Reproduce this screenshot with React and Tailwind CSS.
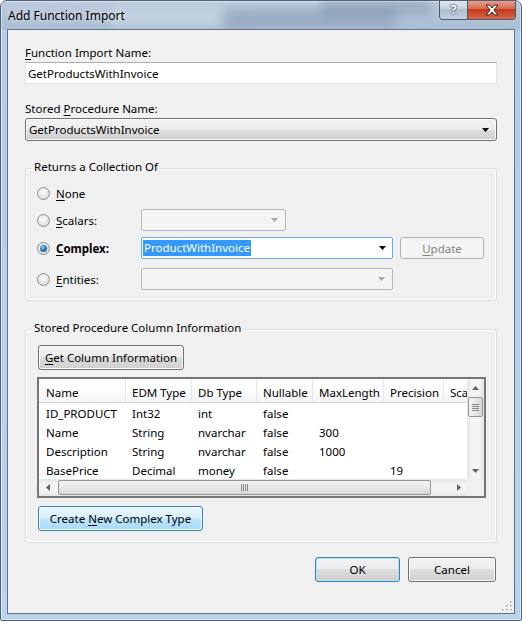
import React from "react";

const btn =
  "flex items-center justify-center rounded-[3px] border border-[#707070] bg-[linear-gradient(180deg,#f2f2f2_0%,#ebebeb_50%,#dddddd_50%,#cfcfcf_100%)] shadow-[inset_0_0_0_1px_#fbfbfb]";
const btnBlue =
  "flex items-center justify-center rounded-[3px] border border-[#3c7fb1] bg-[linear-gradient(180deg,#eaf6fd_0%,#d9f0fc_50%,#bee6fd_50%,#a7d9f5_100%)] shadow-[inset_0_0_0_1px_#f4fbff]";
const btnDefault =
  "flex items-center justify-center rounded-[3px] border border-[#3c7fb1] bg-[linear-gradient(180deg,#f2f2f2_0%,#ebebeb_50%,#dddddd_50%,#cfcfcf_100%)] shadow-[inset_0_0_0_1px_#b6e0f6]";

function U({ children }) {
  return <span className="underline underline-offset-[2px] decoration-1">{children}</span>;
}

function Arrow({ color = "#000" }) {
  return (
    <svg width="7" height="4" viewBox="0 0 7 4">
      <path d="M0 0H7L3.5 4Z" fill={color} />
    </svg>
  );
}

function DisabledCombo({ className }) {
  return (
    <div className={`flex h-[22px] items-center justify-end rounded-[2px] border border-[#b5b9bd] bg-[#f4f4f4] pr-[7px] ${className}`}>
      <Arrow color="#a7a7a7" />
    </div>
  );
}

function Radio({ checked }) {
  return (
    <div className="flex h-[13px] w-[13px] shrink-0 items-center justify-center rounded-full border border-[#8f8f8f] bg-[radial-gradient(circle_at_45%_40%,#ffffff_0%,#e9e9e9_45%,#cfcfcf_100%)]">
      {checked && (
        <div className="h-[7px] w-[7px] rounded-full bg-[radial-gradient(circle_at_40%_35%,#8fd2f8_0%,#2d7cb8_45%,#0c3f6e_100%)]" />
      )}
    </div>
  );
}

function RadioRow({ checked, label, bold, children, className = "" }) {
  return (
    <div className={`flex h-[22px] items-center ${className}`}>
      <div className="flex w-[104px] items-center gap-[6px]">
        <Radio checked={checked} />
        <span className={bold ? "font-bold" : ""}>{label}</span>
      </div>
      {children}
    </div>
  );
}

function Group({ title, className = "", children }) {
  return (
    <div className={`relative w-[472px] rounded-[3px] border border-[#d5dfe5] shadow-[inset_0_0_0_1px_#ffffff] ${className}`}>
      <span className="absolute -top-[10px] left-[7px] bg-[#f0f0f0] px-[1px]">{title}</span>
      {children}
    </div>
  );
}

const cols = [
  { title: "Name", cls: "w-[87px] pl-[7px]" },
  { title: "EDM Type", cls: "w-[66px] pl-[6px]" },
  { title: "Db Type", cls: "w-[65px] pl-[6px]" },
  { title: "Nullable", cls: "w-[56px] pl-[6px]" },
  { title: "MaxLength", cls: "w-[71px] pl-[6px]" },
  { title: "Precision", cls: "w-[60px] pl-[6px]" },
  { title: "Scale", cls: "w-[60px] pl-[6px]" },
];

const rows = [
  ["ID_PRODUCT", "Int32", "int", "false", "", "", ""],
  ["Name", "String", "nvarchar", "false", "300", "", ""],
  ["Description", "String", "nvarchar", "false", "1000", "", ""],
  ["BasePrice", "Decimal", "money", "false", "", "19", ""],
];

function ScrollArrow({ dir }) {
  const d = {
    up: "M3.5 0L7 4H0Z",
    down: "M0 0H7L3.5 4Z",
    left: "M0 3.5L4 0V7Z",
    right: "M0 0L4 3.5L0 7Z",
  }[dir];
  const vert = dir === "up" || dir === "down";
  return (
    <div className="flex h-[17px] w-[17px] shrink-0 items-center justify-center">
      <svg width={vert ? 7 : 4} height={vert ? 4 : 7} viewBox={vert ? "0 0 7 4" : "0 0 4 7"}>
        <path d={d} fill="#5f5f5f" />
      </svg>
    </div>
  );
}

function ColumnGrid({ className = "" }) {
  return (
    <div className={`flex h-[121px] w-[449px] flex-col border-2 border-[#767676] bg-white ${className}`}>
      <div className="flex h-[100px]">
        <div className="flex w-[428px] flex-col overflow-hidden">
          <div className="flex h-[24px] shrink-0 border-b border-[#d5d5d5] bg-[linear-gradient(180deg,#ffffff_0%,#ffffff_40%,#f3f4f6_100%)]">
            {cols.map((c) => (
              <div key={c.title} className={`shrink-0 whitespace-nowrap border-r border-[#e3e8ee] pt-[6px] ${c.cls}`}>
                {c.title}
              </div>
            ))}
          </div>
          {rows.map((r, i) => (
            <div key={i} className="flex h-[19px] shrink-0">
              {r.map((v, j) => (
                <div key={j} className={`shrink-0 border-r border-transparent pt-[3px] ${cols[j].cls}`}>
                  {v}
                </div>
              ))}
            </div>
          ))}
        </div>
        <div className="flex w-[17px] flex-col bg-[linear-gradient(90deg,#e5e5e5_0%,#f4f4f4_30%,#f4f4f4_70%,#e5e5e5_100%)]">
          <ScrollArrow dir="up" />
          <div className="mx-auto mt-[1px] flex h-[20px] w-[15px] flex-col items-center justify-center gap-[1px] rounded-[2px] border border-[#959595] bg-[linear-gradient(90deg,#f3f3f3_0%,#e8e8e8_50%,#d6d6d6_100%)]">
            <div className="h-[1px] w-[7px] bg-[#8a8a8a]" />
            <div className="h-[1px] w-[7px] bg-[#8a8a8a]" />
            <div className="h-[1px] w-[7px] bg-[#8a8a8a]" />
            <div className="h-[1px] w-[7px] bg-[#8a8a8a]" />
          </div>
          <div className="flex-1" />
          <ScrollArrow dir="down" />
        </div>
      </div>
      <div className="flex h-[17px]">
        <div className="flex w-[428px] items-center bg-[linear-gradient(180deg,#e5e5e5_0%,#f4f4f4_30%,#f4f4f4_70%,#e5e5e5_100%)]">
          <ScrollArrow dir="left" />
          <div className="ml-[2px] flex h-[15px] w-[373px] items-center justify-center gap-[1px] rounded-[2px] border border-[#959595] bg-[linear-gradient(180deg,#f3f3f3_0%,#e8e8e8_50%,#d6d6d6_100%)]">
            <div className="h-[7px] w-[1px] bg-[#8a8a8a]" />
            <div className="h-[7px] w-[1px] bg-[#8a8a8a]" />
            <div className="h-[7px] w-[1px] bg-[#8a8a8a]" />
            <div className="h-[7px] w-[1px] bg-[#8a8a8a]" />
          </div>
          <div className="flex-1" />
          <ScrollArrow dir="right" />
        </div>
        <div className="w-[17px] bg-[#f0f0f0]" />
      </div>
    </div>
  );
}

export default function App() {
  return (
    <div className="h-[621px] w-[522px] bg-white font-['Noto_Sans',sans-serif] text-[11.5px] leading-[15px] text-black">
      <div className="relative flex h-[621px] w-[522px] flex-col items-start overflow-hidden rounded-t-[7px] rounded-b-[2px] border border-[#4f6174] bg-[linear-gradient(180deg,#bccbdb_0px,#a9bdd3_28px,#b3cbe6_29px,#bad2ec_100%)] pl-[6px] shadow-[inset_0_0_0_1px_rgba(255,255,255,0.5)]">
        {/* blurred glass backdrop */}
        <div className="absolute left-[110px] top-[6px] h-[20px] w-[110px] bg-[#c9d6e3] opacity-70 blur-[4px]" />
        <div className="absolute left-[225px] top-[8px] h-[20px] w-[170px] bg-[#8499b1] opacity-50 blur-[5px]" />
        <div className="absolute left-[320px] top-[0px] h-[14px] w-[110px] bg-[#6f859f] opacity-40 blur-[5px]" />

        {/* title bar */}
        <div className="relative flex h-[28px] w-full items-start">
          <div className="pl-[1px] pt-[7px] text-[12px] text-black [text-shadow:0_0_6px_rgba(255,255,255,0.9)]">
            Add Function Import
          </div>
          <div className="-mt-[1px] ml-auto mr-[5px] flex h-[20px] overflow-hidden rounded-b-[4px] border border-t-0 border-[#4a5a6c]">
            <div className="flex w-[28px] items-center justify-center border-r border-[#4a5a6c] bg-[linear-gradient(180deg,#e3e9f0_0%,#c9d4df_45%,#aebccc_50%,#c2cfdc_100%)] text-[13px] font-bold leading-none text-white [text-shadow:0_0_2px_#1d2733,0_0_1px_#1d2733]">
              ?
            </div>
            <div className="flex w-[47px] items-center justify-center bg-[linear-gradient(180deg,#eaa493_0%,#d86a50_45%,#c23a1a_50%,#d8664a_100%)]">
              <svg width="14" height="12" viewBox="0 0 14 12">
                <path
                  d="M1 1H4.5L7 4L9.5 1H13L8.8 6L13 11H9.5L7 8L4.5 11H1L5.2 6Z"
                  fill="#ffffff"
                  stroke="#3d1a12"
                  strokeWidth="1"
                  strokeLinejoin="round"
                />
              </svg>
            </div>
          </div>
        </div>

        {/* client area */}
        <div className="relative flex h-[585px] w-[508px] flex-col border border-[#627389] bg-[#f0f0f0] pl-[17px]">
          <div className="mt-[15px]">
            <U>F</U>unction Import Name:
          </div>
          <div className="mt-[2px] flex h-[22px] w-[472px] items-center border border-[#dfe3e9] border-t-[#abadb3] bg-white pl-[2px]">
            GetProductsWithInvoice
          </div>

          <div className="mt-[17px]">
            Stored <U>P</U>rocedure Name:
          </div>
          <div className={`mt-[2px] h-[23px] w-[472px] justify-between! pl-[3px] pr-[7px] ${btn}`}>
            <span>GetProductsWithInvoice</span>
            <Arrow />
          </div>

          <Group title="Returns a Collection Of" className="mt-[27px]">
            <div className="flex flex-col pb-[10px] pl-[11px] pt-[13px]">
              <RadioRow label={<><U>N</U>one</>} />
              <RadioRow label={<><U>S</U>calars:</>} className="mt-[5px]">
                <DisabledCombo className="w-[145px]" />
              </RadioRow>
              <RadioRow checked bold label={<><U>C</U>omplex:</>} className="mt-[6px]">
                <div className="flex h-[22px] w-[252px] items-center justify-between rounded-[2px] border border-[#6aa9e3] bg-white pl-[1px] pr-[6px]">
                  <span className="bg-[#3399ff] px-[1px] leading-[16px] text-white">ProductWithInvoice</span>
                  <Arrow />
                </div>
                <div className="ml-[7px] flex h-[22px] w-[84px] items-center justify-center rounded-[3px] border border-[#adb2b5] bg-[#f4f4f4] text-[#838383]">
                  <span>
                    <U>U</U>pdate
                  </span>
                </div>
              </RadioRow>
              <RadioRow label={<><U>E</U>ntities:</>} className="mt-[9px]">
                <DisabledCombo className="w-[252px]" />
              </RadioRow>
            </div>
          </Group>

          <Group title="Stored Procedure Column Information" className="mt-[28px]">
            <div className="flex flex-col items-start pb-[11px] pl-[12px] pt-[15px]">
              <div className={`h-[25px] w-[146px] ${btn}`}>
                <span>
                  <U>G</U>et Column Information
                </span>
              </div>
              <ColumnGrid className="-ml-[1px] mt-[7px]" />
              <div className={`mt-[8px] h-[25px] w-[165px] ${btnBlue}`}>
                <span>
                  Create <U>N</U>ew Complex Type
                </span>
              </div>
            </div>
          </Group>

          <div className="mt-[14px] flex w-[472px] justify-end gap-[8px] pr-[1px]">
            <div className={`h-[25px] w-[85px] ${btnDefault}`}>OK</div>
            <div className={`h-[25px] w-[88px] ${btn}`}>Cancel</div>
          </div>

          {/* size grip */}
          <svg className="absolute bottom-[2px] right-[2px]" width="11" height="11" viewBox="0 0 11 11">
            {[
              [9, 1], [9, 5], [5, 5], [9, 9], [5, 9], [1, 9],
            ].map(([x, y]) => (
              <g key={`${x}-${y}`}>
                <rect x={x} y={y} width="1.5" height="1.5" fill="#ffffff" transform="translate(0.7 0.7)" />
                <rect x={x} y={y} width="1.5" height="1.5" fill="#a0a6ad" />
              </g>
            ))}
          </svg>
        </div>
      </div>
    </div>
  );
}
